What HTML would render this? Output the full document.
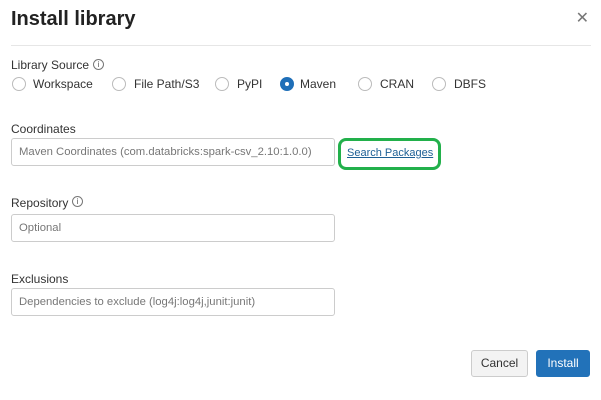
<!DOCTYPE html>
<html><head><style>
*{box-sizing:border-box;margin:0;padding:0}
body{width:601px;height:400px;background:#fff;font-family:"Liberation Sans",sans-serif;color:#333;position:relative;overflow:hidden}
.a{position:absolute;white-space:nowrap}
.t{font-size:20px;font-weight:bold;color:#222;left:11px;top:8px}
.x{right:12px;top:8px;font-size:16px;color:#777}
.sep{left:11px;top:45px;width:580px;height:1px;background:#e6e6e6}
.l{font-size:12px;color:#333}
.r{width:14px;height:14px;border:1px solid #bbb;border-radius:50%;}
.rs{background:#1f6fb8;border-color:#1f6fb8}
.rs:after{content:"";position:absolute;left:4px;top:4px;width:4px;height:4px;background:#fff;border-radius:50%}
.in{border:1px solid #ccc;border-radius:3px;height:28px;width:324px;left:11px;font-size:11.3px;color:#777;padding:7px 7px}
.i{width:11px;height:11px;border:1px solid #777;border-radius:50%;font-size:8px;text-align:center;line-height:9px;color:#555}
.btn{height:27px;border-radius:3px;font-size:12px;text-align:center;line-height:25px;top:350px}
</style></head><body>
<div class="a t">Install library</div>
<div class="a x">✕</div>
<div class="a sep"></div>
<div class="a l" style="left:11px;top:58px">Library Source</div>
<div class="a i" style="left:93px;top:59px">i</div>
<div class="a r" style="left:12px;top:77px"></div><div class="a l" style="left:33px;top:77px">Workspace</div>
<div class="a r" style="left:112px;top:77px"></div><div class="a l" style="left:134px;top:77px">File Path/S3</div>
<div class="a r" style="left:215px;top:77px"></div><div class="a l" style="left:237px;top:77px">PyPI</div>
<div class="a r rs" style="left:280px;top:77px"></div><div class="a l" style="left:300px;top:77px">Maven</div>
<div class="a r" style="left:358px;top:77px"></div><div class="a l" style="left:380px;top:77px">CRAN</div>
<div class="a r" style="left:432px;top:77px"></div><div class="a l" style="left:454px;top:77px">DBFS</div>
<div class="a l" style="left:11px;top:122px">Coordinates</div>
<div class="a in" style="top:138px">Maven Coordinates (com.databricks:spark-csv_2.10:1.0.0)</div>
<div class="a" style="left:338px;top:138px;width:103px;height:32px;border:3px solid #22b04b;border-radius:8px"></div>
<div class="a l" style="left:347px;top:147px;color:#1d5f95;text-decoration:underline;font-size:11px">Search Packages</div>
<div class="a l" style="left:11px;top:196px">Repository</div>
<div class="a i" style="left:72px;top:196px">i</div>
<div class="a in" style="top:214px">Optional</div>
<div class="a l" style="left:11px;top:272px">Exclusions</div>
<div class="a in" style="top:288px">Dependencies to exclude (log4j:log4j,junit:junit)</div>
<div class="a btn" style="left:471px;width:57px;background:#f3f3f3;border:1px solid #ccc;color:#333">Cancel</div>
<div class="a btn" style="left:536px;width:54px;background:#2272b9;border:1px solid #2272b9;color:#fff">Install</div>
</body></html>
